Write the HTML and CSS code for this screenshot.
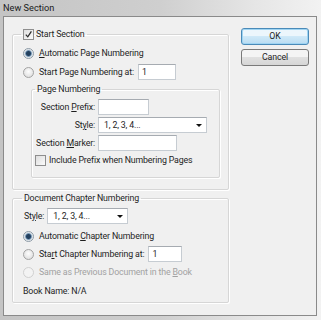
FILE: index.html
```html
<!DOCTYPE html>
<html>
<head>
    <title>New Section</title>
    <link rel="stylesheet" href="styles.css">
</head>
<body>
    <div class="window">
        <div class="titlebar">New Section</div>
        <div class="client">
            <div class="main">
                <fieldset class="group section">
                    <legend><span class="check on"><svg viewBox="0 0 10 10"><path d="M2 5.2 L4.2 7.6 L8.2 1.6" /></svg></span><span>Start Section</span></legend>
                    <div class="row first"><span class="radio on"></span><span><u>A</u>utomatic Page Numbering</span></div>
                    <div class="row second"><span class="radio"></span><span>Start Page Numbering at:</span><span class="field start-page">1</span></div>

                    <fieldset class="group inner">
                        <legend>Page Numbering</legend>
                        <div class="form">
                            <span class="label">Section <u>P</u>refix:</span>
                            <span class="field prefix"></span>
                            <span class="label">St<u>y</u>le:</span>
                            <span class="field select style-wide">1, 2, 3, 4...<i class="arrow"></i></span>
                            <span class="label">Section <u>M</u>arker:</span>
                            <span class="field marker"></span>
                        </div>
                        <div class="row include"><span class="check"></span><span>Include Prefix when Numbering Pages</span></div>
                    </fieldset>
                </fieldset>

                <fieldset class="group chapter">
                    <legend>Document Chapter Numbering</legend>
                    <div class="row style-row"><span>St<u>y</u>le:</span><span class="field select style-short">1, 2, 3, 4...<i class="arrow"></i></span></div>
                    <div class="row auto-chapter"><span class="radio on"></span><span>Automatic <u>C</u>hapter Numbering</span></div>
                    <div class="row"><span class="radio"></span><span>Sta<u>r</u>t Chapter Numbering at:</span><span class="field start-chapter">1</span></div>
                    <div class="row disabled"><span class="radio"></span><span>Same as Previous Document in the <u>B</u>ook</span></div>
                    <div class="row book"><span>Book Name: N/A</span></div>
                </fieldset>
            </div>

            <div class="buttons">
                <div class="btn default">OK</div>
                <div class="btn">Cancel</div>
            </div>
        </div>
    </div>
</body>
</html>
```

FILE: styles.css
```css
body {
    margin: 0;
    background: #e4e4e4;
    font-family: Roboto, "Noto Sans", sans-serif;
    font-size: 8.8px;
    letter-spacing: -0.15px;
    color: #1e1e1e;
}
u { text-decoration-thickness: 1px; text-underline-offset: 1px; }
.window {
    width: 321px;
    height: 320px;
    display: flex;
    flex-direction: column;
    background: linear-gradient(90deg, #c4c4c4, #cfcfcf 50%, #e6e6e6 80%, #f2f2f2);
}
.titlebar {
    height: 16px;
    line-height: 15px;
    padding-left: 3px;
    font-size: 9.2px;
    letter-spacing: 0;
    color: #202020;
}
.client {
    margin: 0 4px 4px 3px;
    flex: 1;
    display: flex;
    background: #f0f0f0;
    border: 1px solid #8a8a8a;
    padding: 11px 7px 0 8px;
}
.main { width: 218px; }

.group {
    margin: 0;
    padding: 0 8px 0 10px;
    border: 1px solid #d6d6d6;
    border-radius: 2px;
    box-shadow: inset 1px 1px 0 #fff, 1px 1px 0 #fff;
}
.group legend {
    padding: 0 2px;
    margin-left: -2px;
    height: 12px;
    line-height: 12px;
    display: flex;
    align-items: center;
}
.section { padding-bottom: 11px; }
.chapter { margin-top: 2px; padding-bottom: 2px; }
.chapter legend { margin-left: -1px; }

.row {
    height: 18px;
    display: flex;
    align-items: center;
    white-space: nowrap;
}
.first { margin-top: 4px; }
.second { margin-top: 1px; }
.disabled { color: #a2a2a2; }

.radio {
    width: 9px;
    height: 9px;
    border: 1px solid #a3a3a3;
    border-radius: 50%;
    background: radial-gradient(circle at 50% 40%, #fdfdfd, #d8d8d8);
    margin: 0 5px 0 0;
    flex: none;
}
.radio.on {
    background: radial-gradient(circle, #23405e 0 2px, #5f84a8 2.8px, #c8d4de 3.6px, #f4f4f4 4.5px);
    border-color: #8c9aa6;
}
.disabled .radio { border-color: #d0d0d0; background: #f3f3f3; }

.check {
    width: 9px;
    height: 9px;
    border: 1px solid #8e8e8e;
    background: linear-gradient(135deg, #dedede, #fbfbfb);
    margin-right: 2px;
    display: flex;
    flex: none;
}
.check svg { width: 9px; height: 9px; }
.check path { fill: none; stroke: #2c2c2c; stroke-width: 1.4; }

.field {
    height: 14px;
    line-height: 14px;
    background: #fff;
    border: 1px solid #c6ccd2;
    border-top-color: #a6abb1;
    padding-left: 3px;
    box-sizing: content-box;
    position: relative;
}
.start-page { width: 33px; margin-left: 4px; }
.start-chapter { width: 29px; margin-left: 4px; }

.inner {
    margin: 2px 0 0 8px;
    padding: 0 8px 8px 3px;
}
.inner legend { margin-left: 0; }
.form {
    display: grid;
    grid-template-columns: 60px auto;
    column-gap: 3px;
    row-gap: 2px;
    align-items: center;
    justify-items: start;
    margin-top: 4px;
}
.label { justify-self: end; white-space: nowrap; }
.prefix { width: 46px; }
.marker { width: 74px; }
.select { padding-left: 5px; }
.style-wide { width: 102px; }
.style-short { width: 74px; margin-left: 3px; }
.arrow {
    position: absolute;
    right: 4px;
    top: 6px;
    border-left: 3px solid transparent;
    border-right: 3px solid transparent;
    border-top: 3px solid #111;
}
.include .check { margin-right: 3px; }

.style-row { margin-top: 3px; padding-left: 1px; }
.auto-chapter { margin-top: 2px; }
.book { margin-top: 1px; }

.buttons {
    margin-left: 12px;
    display: flex;
    flex-direction: column;
    gap: 4px;
}
.btn {
    width: 66px;
    height: 15px;
    line-height: 15px;
    text-align: center;
    border: 1px solid #7a7a7a;
    border-radius: 3px;
    background: linear-gradient(#f4f4f4 45%, #e0e0e0 50%, #d6d6d6);
}
.btn.default {
    border-color: #4a8ab8;
    background: linear-gradient(#ecf6fc 45%, #cfe9f8 50%, #b9dcf2);
    box-shadow: inset 0 0 0 1px #9fd4f2;
}
```
